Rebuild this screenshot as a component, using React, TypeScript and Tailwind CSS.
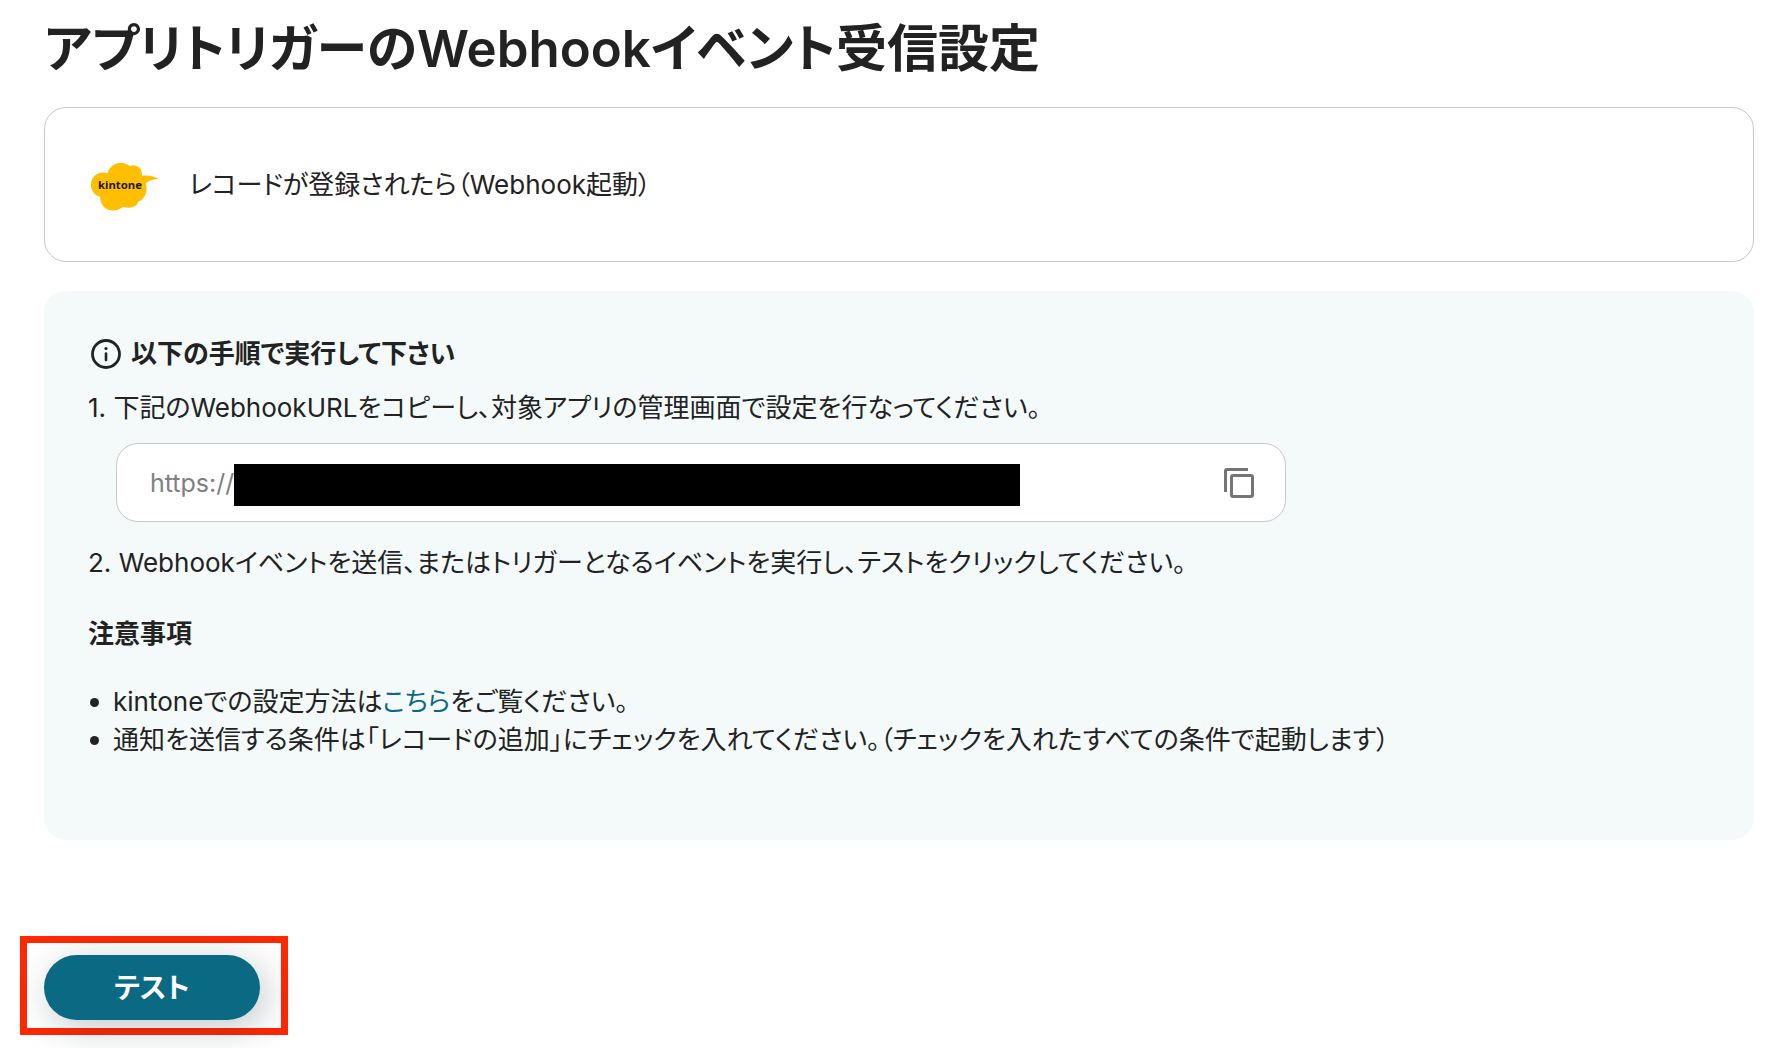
import { useState } from 'react';

function KintoneLogo() {
  return (
    <svg viewBox="33 38 204 144" className="h-12 w-[68px] shrink-0" role="img" aria-label="kintone">
      <path
        fill="#ffbf00"
        d="M33 103C33 79 54 61 83 68.500C90 40 124 28 149 47C168 40 188 52 186 77C202 73 224 78 236 86C220 86 206 91 197 99C205 124 193 147 176 153C170 171 150 176 130 169C106 189 62 184 60 139C44 135 33 121 33 103Z"
      />
      <text
        x="54"
        y="115"
        fontSize="34"
        fontWeight="700"
        fill="#231815"
        className="font-['Noto_Sans',sans-serif]"
      >
        kintone
      </text>
    </svg>
  );
}

function InfoIcon() {
  return (
    <svg viewBox="0 0 30 30" className="size-[30px] shrink-0" fill="none" stroke="#222222" aria-hidden="true">
      <circle cx="15" cy="15" r="13.500" strokeWidth="2.800" />
      <path d="M15 14.500V21" strokeWidth="2.600" strokeLinecap="round" />
      <circle cx="15" cy="9.500" r="1.600" fill="#222222" stroke="none" />
    </svg>
  );
}

function CopyIcon() {
  return (
    <svg viewBox="0 0 30 30" className="size-[30px]" fill="none" stroke="#757575" strokeWidth="3" aria-hidden="true">
      <path d="M1.500 24V3Q1.500 1.500 3 1.500H24" />
      <rect x="7.500" y="7.500" width="21" height="21" rx="1.500" />
    </svg>
  );
}

export default function App() {
  const [url] = useState('https://');

  return (
    <main
      lang="ja"
      className="min-h-screen bg-white font-['Inter','Noto_Sans_CJK_JP',sans-serif] text-[26px] leading-[38px] text-[#222222] [font-feature-settings:'palt']"
    >
      <div className="pr-[34px] pl-11">
        <h1 className="pt-[13px] text-[51px] leading-[72px] font-semibold">アプリトリガーのWebhookイベント受信設定</h1>

        <section className="mt-[22px] flex items-center gap-[30px] rounded-[22px] border border-[#c8c8c8] px-[46px] pt-[55px] pb-[50px]">
          <KintoneLogo />
          <p className="pb-1">レコードが登録されたら（Webhook起動）</p>
        </section>

        <section className="mt-[29px] rounded-[22px] bg-[#f4fafa] px-11 pt-11 pb-[81px]">
          <h2 className="flex items-center gap-[10px] pl-[3px] font-semibold">
            <InfoIcon />
            以下の手順で実行して下さい
          </h2>

          <p className="mt-4">
            <label htmlFor="webhook-url">
              1. 下記のWebhookURLをコピーし、対象アプリの管理画面で設定を行なってください。
            </label>
          </p>
          <div className="mt-4 ml-7 flex h-[79px] max-w-[1170px] items-center rounded-[22px] border border-[#c8c8c8] bg-white pr-[31px] pl-[33px]">
            <input
              id="webhook-url"
              readOnly
              value={url}
              className="w-[84px] shrink-0 bg-transparent text-[25px] text-[#808080] outline-none"
            />
            <span className="mt-1 h-[42px] w-[786px] bg-black" />
            <button type="button" aria-label="URLをコピー" className="ml-auto">
              <CopyIcon />
            </button>
          </div>
          <p className="mt-[22px]">
            2. Webhookイベントを送信、またはトリガーとなるイベントを実行し、テストをクリックしてください。
          </p>

          <h3 className="mt-[33px] font-semibold">注意事項</h3>
          <ul className="mt-[30px]">
            <li className="flex items-center gap-[14px] pl-[2px]">
              <span className="size-[9px] shrink-0 rounded-full bg-[#222222]" />
              <span>
                kintoneでの設定方法は
                <a href="#kintone" className="text-[#0a6a83]">
                  こちら
                </a>
                をご覧ください。
              </span>
            </li>
            <li className="flex items-center gap-[14px] pl-[2px]">
              <span className="size-[9px] shrink-0 rounded-full bg-[#222222]" />
              <span>
                通知を送信する条件は「レコードの追加」にチェックを入れてください。（チェックを入れたすべての条件で起動します）
              </span>
            </li>
          </ul>
        </section>
      </div>

      <div className="mt-24 ml-5 w-fit border-[7px] border-[#ff2800] pt-3 pr-[21px] pb-2 pl-[17px]">
        <button
          type="button"
          className="block h-[65px] w-[216px] rounded-full bg-[#0a6a83] text-[28px] font-semibold text-white shadow-[6px_8px_36px_rgba(20,40,50,0.25)]"
        >
          テスト
        </button>
      </div>
    </main>
  );
}
